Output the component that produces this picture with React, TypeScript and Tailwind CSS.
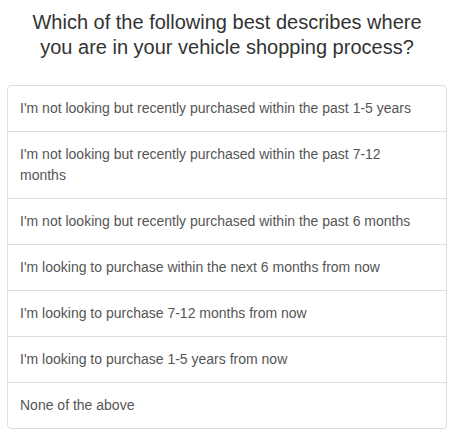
const options = [
  "I'm not looking but recently purchased within the past 1-5 years",
  "I'm not looking but recently purchased within the past 7-12 months",
  "I'm not looking but recently purchased within the past 6 months",
  "I'm looking to purchase within the next 6 months from now",
  "I'm looking to purchase 7-12 months from now",
  "I'm looking to purchase 1-5 years from now",
  'None of the above',
]

export default function App() {
  return (
    <main className="min-h-screen bg-white px-[7px] pt-[10px] font-['Liberation_Sans',Arial,sans-serif]">
      {/* question */}
      <h1 className="text-center text-[20px] leading-[25px] text-[#333] mb-[25px] px-4">
        Which of the following best describes where you are in your vehicle shopping process?
      </h1>

      {/* answers */}
      <div className="border border-[#ddd] rounded-[4px] w-[440px]">
        {options.map((opt, i) => (
          <div
            key={i}
            className={`pl-3 pr-4 py-3 text-[14px] leading-[21px] text-[#555] ${
              i > 0 ? 'border-t border-[#ddd]' : ''
            }`}
          >
            {opt}
          </div>
        ))}
      </div>
    </main>
  )
}
